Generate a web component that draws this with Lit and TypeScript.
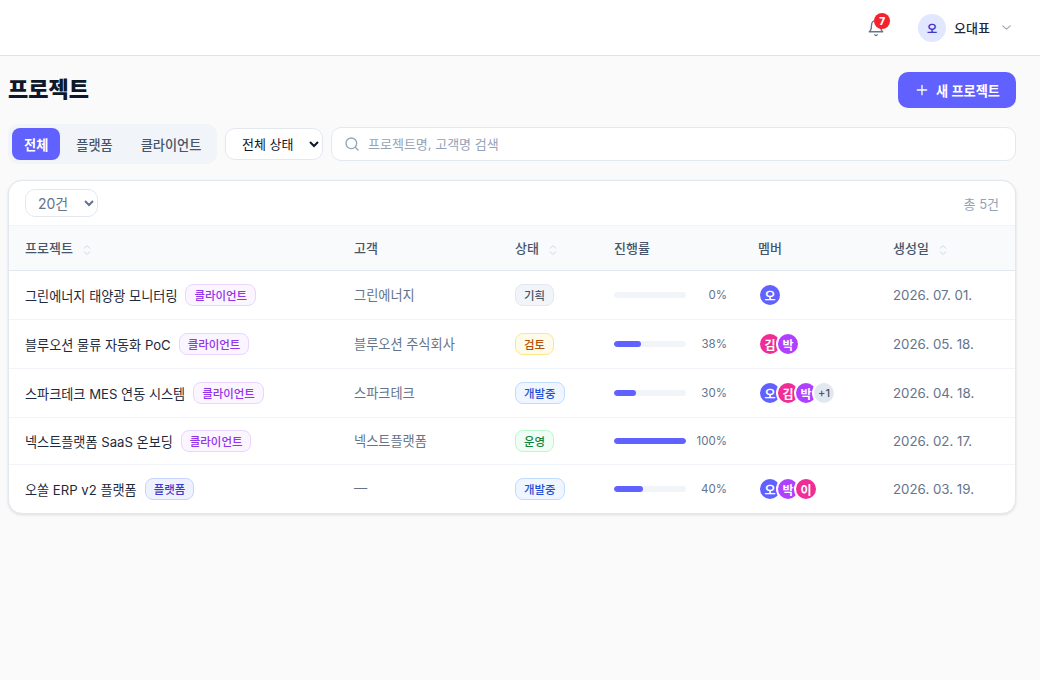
import { LitElement, html, css, nothing } from "lit";
import { customElement } from "lit/decorators.js";

type Av = { t: string; c: string };
const O = { t: "오", c: "#6161ff" }, K = { t: "김", c: "#f02d96" }, P = { t: "박", c: "#b040ff" }, L = { t: "이", c: "#f02d96" };
const rows = [
  { name: "그린에너지 태양광 모니터링", kind: "client", client: "그린에너지", st: "plan", stT: "기획", pct: 0, av: [O], more: 0, date: "2026. 07. 01." },
  { name: "블루오션 물류 자동화 PoC", kind: "client", client: "블루오션 주식회사", st: "review", stT: "검토", pct: 38, av: [K, P], more: 0, date: "2026. 05. 18." },
  { name: "스파크테크 MES 연동 시스템", kind: "client", client: "스파크테크", st: "dev", stT: "개발중", pct: 30, av: [O, K, P], more: 1, date: "2026. 04. 18." },
  { name: "넥스트플랫폼 SaaS 온보딩", kind: "client", client: "넥스트플랫폼", st: "live", stT: "운영", pct: 100, av: [] as Av[], more: 0, date: "2026. 02. 17." },
  { name: "오쏠 ERP v2 플랫폼", kind: "platform", client: "—", st: "dev", stT: "개발중", pct: 40, av: [O, P, L], more: 0, date: "2026. 03. 19." },
];

const sortIcon = html`<svg class="sort" viewBox="0 0 8 12" width="8" height="12" fill="none" stroke="#cbd5e1" stroke-width="1"><path d="M1 4.5 4 1.5l3 3M1 7.5l3 3 3-3"/></svg>`;

@customElement("app-root")
export class AppRoot extends LitElement {
  static styles = css`
    :host { display: block; min-height: 680px; background: #fafafa; font-family: Inter, "Noto Sans CJK KR", sans-serif; color: #0f172a; }
    * { box-sizing: border-box; }
    .top { height: 56px; background: #fff; border-bottom: 1px solid #e2e2e2; display: flex; justify-content: flex-end; align-items: center; padding: 0 27px 0 0; }
    .bell { position: relative; width: 18px; height: 18px; margin-right: 33px; display: flex; }
    .badge { position: absolute; left: 7px; top: -6px; width: 16px; height: 16px; border-radius: 50%; background: #f5222d; color: #fff; font-size: 10px; font-weight: 800; display: flex; align-items: center; justify-content: center; }
    .user { display: flex; align-items: center; }
    .me { width: 28px; height: 28px; border-radius: 50%; background: #e0e7ff; color: #4338ca; font-size: 11px; font-weight: 600; display: flex; align-items: center; justify-content: center; margin-right: 8px; }
    .uname { font-size: 13px; font-weight: 500; color: #1e293b; margin-right: 10px; }
    main { padding: 16px 24px 0 8px; }
    .head { display: flex; justify-content: space-between; align-items: flex-start; height: 36px; margin-bottom: 16px; }
    h1 { margin: 0; font-size: 22px; line-height: 35px; font-weight: 800; color: #0f172a; }
    .add { height: 36px; width: 118px; border: 0; border-radius: 10px; background: #6161ff; color: #fff; font: 600 13.2px Inter, "Noto Sans CJK KR", sans-serif; display: flex; align-items: center; justify-content: center; gap: 6px; padding: 0; }
    .filters { display: flex; align-items: center; gap: 8px; margin-bottom: 16px; height: 40px; }
    .tabs { display: flex; padding: 4px; background: #f1f5f9; border-radius: 10px; height: 40px; width: 209px; flex: none; }
    .tab { flex: none; white-space: nowrap; height: 32px; padding: 0 12px; border-radius: 8px; font-size: 13.2px; font-weight: 500; color: #475569; display: flex; align-items: center; margin-right: 4px; }
    .tab:last-child { margin-right: 0; }
    .tab.on { background: #6161ff; color: #fff; font-weight: 600; }
    select { font-family: Inter, "Noto Sans CJK KR", sans-serif; background: #fff; border: 1px solid #e2e8f0; }
    .stsel { width: 98px; height: 32px; border-radius: 10px; font-size: 13px; color: #0f172a; padding: 0 0 0 12px; }
    .search { flex: 1; height: 34px; border: 1px solid #e2e8f0; border-radius: 10px; background: #fff; display: flex; align-items: center; padding: 0 12px; gap: 8px; font-size: 13px; line-height: 30px; color: #94a3b8; }
    .card { background: #fff; border: 1px solid #e2e8f0; border-radius: 14px; overflow: hidden; box-shadow: 0 1px 3px rgba(15, 23, 42, 0.12); }
    .bar { height: 44px; display: flex; align-items: center; justify-content: space-between; padding: 0 16px; }
    .size { width: 73px; height: 28px; border-radius: 10px; font-size: 14px; color: #64748b; padding: 0 0 0 8px; }
    .total { font-size: 13px; color: #94a3b8; }
    table { width: 100%; border-collapse: collapse; table-layout: fixed; }
    th { height: 45px; background: #f8fafc; border-top: 1px solid #f1f5f9; border-bottom: 1px solid #e2e8f0; text-align: left; font-size: 13px; font-weight: 500; color: #475569; padding: 0 16px 2px; }
    .sort { margin-left: 10px; vertical-align: -3px; }
    td { padding: 12px 16px; border-bottom: 1px solid #f1f5f9; font-size: 13.2px; color: #64748b; vertical-align: middle; white-space: nowrap; }
    tr:last-child td { border-bottom: 0; }
    td.cl { padding-bottom: 14px; }
    .nm { display: flex; align-items: center; gap: 8px; font-size: 13.15px; color: #1e293b; font-weight: 400; }
    .pill { display: inline-flex; align-items: center; height: 22px; padding: 0 8px; border-radius: 8px; border: 1px solid; font-size: 11.45px; font-weight: 500; }
    .client { background: #faf5ff; border-color: #e9d5ff; color: #9333ea; }
    .platform { background: #eef2ff; border-color: #c7d2fe; color: #4338ca; }
    .plan { background: #f1f5f9; border-color: #e2e8f0; color: #475569; }
    .review { background: #fffbeb; border-color: #fde68a; color: #b45309; }
    .dev { background: #eff6ff; border-color: #bfdbfe; color: #1d4ed8; }
    .live { background: #f0fdf4; border-color: #bbf7d0; color: #15803d; }
    .prog { display: flex; align-items: center; gap: 8px; }
    .track { flex: none; width: 72px; height: 6px; border-radius: 3px; background: #f1f5f9; overflow: hidden; }
    .fill { height: 100%; background: #6161ff; border-radius: 3px; }
    .pct { flex: none; width: 33px; text-align: right; font-size: 11.5px; color: #64748b; }
    .avs { display: flex; height: 24px; }
    .av { width: 24px; height: 24px; border-radius: 50%; border: 2px solid #fff; color: #fff; font-size: 12px; font-weight: 600; display: flex; align-items: center; justify-content: center; margin-right: -6px; }
    .av.more { background: #e2e8f0; color: #475569; font-size: 11px; font-weight: 500; }
    .date { font-size: 13.3px; }
  `;

  render() {
    return html`
      <div class="top">
        <div class="bell">
          <svg viewBox="0 0 24 24" width="18" height="18" fill="none" stroke="#64748b" stroke-width="1.8" stroke-linecap="round" stroke-linejoin="round"><path d="M6 8a6 6 0 0 1 12 0c0 7 3 9 3 9H3s3-2 3-9"/><path d="M10.3 21a1.94 1.94 0 0 0 3.4 0"/></svg>
          <span class="badge">7</span>
        </div>
        <div class="user">
          <span class="me">오</span><span class="uname">오대표</span>
          <svg viewBox="0 0 24 24" width="13" height="13" fill="none" stroke="#94a3b8" stroke-width="2" stroke-linecap="round" stroke-linejoin="round"><path d="m5 9 7 6 7-6"/></svg>
        </div>
      </div>
      <main>
        <div class="head">
          <h1>프로젝트</h1>
          <button class="add"><svg viewBox="0 0 24 24" width="16" height="16" fill="none" stroke="#fff" stroke-width="2" stroke-linecap="round"><path d="M12 5v14M5 12h14"/></svg>새 프로젝트</button>
        </div>
        <div class="filters">
          <div class="tabs"><span class="tab on">전체</span><span class="tab">플랫폼</span><span class="tab">클라이언트</span></div>
          <select class="stsel"><option>전체 상태</option></select>
          <div class="search">
            <svg viewBox="0 0 24 24" width="16" height="16" fill="none" stroke="#94a3b8" stroke-width="2" stroke-linecap="round"><circle cx="11" cy="11" r="8"/><path d="m21 21-4.3-4.3"/></svg>
            <span>프로젝트명, 고객명 검색</span>
          </div>
        </div>
        <div class="card">
          <div class="bar"><select class="size"><option>20건</option></select><span class="total">총 5건</span></div>
          <table>
            <colgroup><col style="width:329px"><col style="width:161px"><col style="width:99px"><col style="width:144px"><col style="width:135px"><col></colgroup>
            <thead><tr>
              <th>프로젝트${sortIcon}</th><th>고객</th><th>상태${sortIcon}</th><th>진행률</th><th>멤버</th><th>생성일${sortIcon}</th>
            </tr></thead>
            <tbody>
              ${rows.map((r) => html`<tr>
                <td><div class="nm">${r.name}<span class="pill ${r.kind}">${r.kind === "client" ? "클라이언트" : "플랫폼"}</span></div></td>
                <td class="cl">${r.client}</td>
                <td><span class="pill ${r.st}">${r.stT}</span></td>
                <td><div class="prog"><div class="track"><div class="fill" style="width:${r.pct}%"></div></div><span class="pct">${r.pct}%</span></div></td>
                <td><div class="avs" style=${r.av.length ? "" : "height:auto"}>${r.av.map((a) => html`<span class="av" style="background:${a.c}">${a.t}</span>`)}${r.more ? html`<span class="av more">+${r.more}</span>` : nothing}</div></td>
                <td class="date">${r.date}</td>
              </tr>`)}
            </tbody>
          </table>
        </div>
      </main>
    `;
  }
}
